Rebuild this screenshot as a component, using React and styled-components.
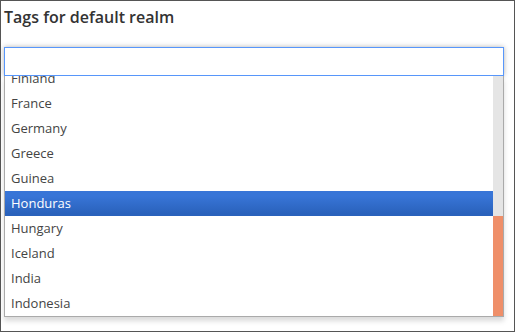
import { useLayoutEffect, useRef } from 'react';
import styled, { createGlobalStyle } from 'styled-components';

const GlobalStyle = createGlobalStyle`
  html, body {
    margin: 0;
    padding: 0;
    background: #fff;
  }
  body {
    font-family: "Open Sans", "Liberation Sans", sans-serif;
  }
`;

const ROW_HEIGHT = 25;
const VIEW_HEIGHT = 240;

const Frame = styled.div`
  box-sizing: border-box;
  width: 515px;
  height: 332px;
  border: 1px solid #555;
  padding: 5px 10px 0 3px;
`;

const Title = styled.h3`
  margin: 0 0 19px;
  font-size: 16px;
  line-height: 22px;
  font-weight: 600;
  color: #333;
`;

const Chooser = styled.div`
  width: 500px;
`;

const SearchField = styled.input`
  display: block;
  box-sizing: border-box;
  width: 100%;
  height: 29px;
  margin: 0;
  padding: 4px 6px;
  border: 1px solid #5897fb;
  box-shadow: 0 0 5px rgba(0, 0, 0, 0.3);
  font: 13px "Open Sans", sans-serif;
  color: #444;
  outline: none;
  background: #fff;
`;

const Drop = styled.div`
  display: flex;
  border: 1px solid #aaa;
  border-top: 0;
  background: #fff;
  box-shadow: 0 4px 5px rgba(0, 0, 0, 0.15);
`;

const Results = styled.ul`
  flex: 1;
  list-style: none;
  margin: 0;
  padding: 0;
  height: ${VIEW_HEIGHT}px;
  overflow: hidden;
`;

const Option = styled.li`
  height: ${ROW_HEIGHT}px;
  box-sizing: border-box;
  padding: 5px 6px;
  line-height: 15px;
  font-size: 13px;
  color: ${({ $active }) => ($active ? '#fff' : '#444')};
  background: ${({ $active }) =>
    $active ? 'linear-gradient(#3875d7 20%, #2a62bc 90%)' : 'transparent'};
`;

const ScrollTrack = styled.div`
  display: flex;
  flex-direction: column;
  justify-content: flex-end;
  width: 10px;
  background: #e5e5e5;
`;

const ScrollThumb = styled.div`
  background: #ef8f69;
`;

const countries = [
  'Argentina', 'Australia', 'Austria', 'Belgium', 'Brazil', 'Canada', 'Chile',
  'China', 'Croatia', 'Czech Republic', 'Denmark', 'Egypt', 'Estonia',
  'Finland', 'France', 'Germany', 'Greece', 'Guinea', 'Honduras', 'Hungary',
  'Iceland', 'India', 'Indonesia',
];

const App = () => {
  const listRef = useRef(null);
  const contentHeight = countries.length * ROW_HEIGHT;
  const thumbHeight = Math.round((VIEW_HEIGHT * VIEW_HEIGHT) / contentHeight);

  useLayoutEffect(() => {
    const list = listRef.current;
    if (list) list.scrollTop = list.scrollHeight;
  }, []);

  return (
    <>
      <GlobalStyle />
      <Frame>
        <Title>Tags for default realm</Title>
        <Chooser>
          <SearchField type="text" />
          <Drop>
            <Results ref={listRef}>
              {countries.map((name) => (
                <Option key={name} $active={name === 'Honduras'}>
                  {name}
                </Option>
              ))}
            </Results>
            <ScrollTrack>
              <ScrollThumb style={{ height: thumbHeight }} />
            </ScrollTrack>
          </Drop>
        </Chooser>
      </Frame>
    </>
  );
};

export default App;
